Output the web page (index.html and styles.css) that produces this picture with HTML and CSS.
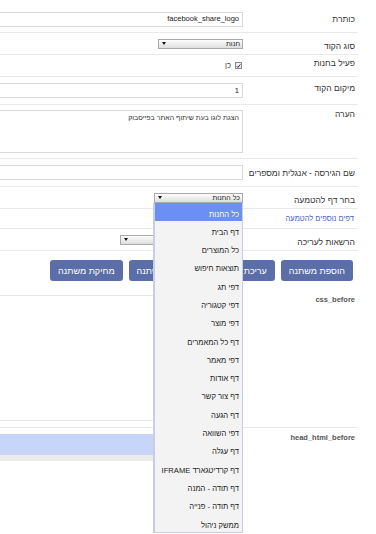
FILE: index.html
```html
<!DOCTYPE html>
<html lang="he" dir="rtl">
<head>
  <meta charset="UTF-8" />
  <meta name="viewport" content="width=device-width, initial-scale=1.0"/>
  <title>עריכת קוד</title>
  <link rel="stylesheet" href="styles.css">
</head>
<body>
  <div class="form">
    <div class="row row-title">
      <label class="lbl">כותרת</label>
      <div class="ctl"><input class="input" type="text" value="facebook_share_logo"></div>
    </div>

    <div class="row row-s">
      <label class="lbl low">סוג הקוד</label>
      <div class="ctl">
        <div class="select w-type"><span>חנות</span><span class="arrow"></span></div>
      </div>
    </div>

    <div class="row row-s">
      <label class="lbl high">פעיל בחנות</label>
      <div class="ctl">
        <span class="check"><svg viewBox="0 0 8 8" width="6" height="6"><path d="M1 4.2 L3.1 6.3 L7 1.4" fill="none" stroke="#222" stroke-width="1.5"/></svg></span>
        <span class="yes">כן</span>
      </div>
    </div>

    <div class="row row-i">
      <label class="lbl high">מיקום הקוד</label>
      <div class="ctl"><input class="input" type="text" value="1"></div>
    </div>

    <div class="row row-note">
      <label class="lbl">הערה</label>
      <div class="ctl"><textarea class="textarea">הצגת לוגו בעת שיתוף האתר בפייסבוק</textarea></div>
    </div>

    <div class="row row-i">
      <label class="lbl">שם הגירסה - אנגלית ומספרים</label>
      <div class="ctl"><input class="input" type="text" value=""></div>
    </div>

    <div class="row row-s">
      <label class="lbl low">בחר דף להטמעה</label>
      <div class="ctl">
        <div class="select w-page"><span>כל החנות</span><span class="arrow"></span></div>
      </div>
    </div>

    <div class="row row-link">
      <div class="lbl"><a href="#" class="more">דפים נוספים להטמעה</a></div>
    </div>

    <div class="row row-s">
      <label class="lbl low">הרשאות לעריכה</label>
      <div class="ctl">
        <div class="select w-perm"><span></span><span class="arrow"></span></div>
      </div>
    </div>

    <div class="actions">
      <button class="btn">הוספת משתנה</button>
      <button class="btn">עריכת משתנה</button>
      <button class="btn">שכפול משתנה</button>
      <button class="btn">מחיקת משתנה</button>
    </div>

    <div class="row row-code">
      <label class="lbl code-lbl">css_before</label>
      <div class="ctl"><div class="editor"></div></div>
    </div>

    <div class="row row-code2">
      <label class="lbl code-lbl">head_html_before</label>
      <div class="ctl">
        <div class="editor2">
          <div class="hl"></div>
          <div class="hscroll"></div>
        </div>
      </div>
    </div>
  </div>

  <ul class="dropdown">
    <li class="opt sel">כל החנות</li>
    <li class="opt">דף הבית</li>
    <li class="opt">כל המוצרים</li>
    <li class="opt">תוצאות חיפוש</li>
    <li class="opt">דפי תג</li>
    <li class="opt">דפי קטגוריה</li>
    <li class="opt">דפי מוצר</li>
    <li class="opt">דף כל המאמרים</li>
    <li class="opt">דפי מאמר</li>
    <li class="opt">דף אודות</li>
    <li class="opt">דף צור קשר</li>
    <li class="opt">דף הגעה</li>
    <li class="opt">דפי השוואה</li>
    <li class="opt">דף עגלה</li>
    <li class="opt">דף קרדיטגארד IFRAME</li>
    <li class="opt">דף תודה - המנה</li>
    <li class="opt">דף תודה - פנייה</li>
    <li class="opt">ממשק ניהול</li>
  </ul>
</body>
</html>
```

FILE: styles.css
```css
* {
  box-sizing: border-box;
}
html, body {
  margin: 0;
  overflow: hidden;
}
body {
  direction: rtl;
  width: 376px;
  height: 534px;
  position: relative;
  background-color: #fff;
  font-family: 'Liberation Sans', 'DejaVu Sans', sans-serif;
  color: #333;
}
.form {
  margin: 0 18px 0 -10px;
}
.row {
  display: flex;
  align-items: center;
  border-bottom: 1px solid #e9e9e9;
}
.row-title {
  height: 33px;
  padding-top: 6px;
}
.row-s {
  height: 22px;
}
.row-i {
  height: 28px;
}
.row-link {
  height: 20px;
}
.row-note {
  height: 54px;
  align-items: flex-start;
  padding-top: 5px;
}
.row-code {
  height: 133px;
  align-items: flex-start;
}
.row-code2 {
  height: 110px;
  align-items: flex-start;
  border-bottom: none;
}
.lbl {
  width: 115px;
  flex: none;
  padding-right: 3px;
  font-size: 8.5px;
  line-height: 10px;
  color: #333;
}
.lbl.low {
  padding-top: 5px;
}
.lbl.high {
  padding-bottom: 5px;
}
.row-note .lbl {
  margin-top: -1px;
}
.ctl {
  flex: 1;
  display: flex;
  align-items: center;
}
.input {
  width: 100%;
  height: 15px;
  border: 1px solid #d9d9d9;
  padding: 0 3px 1px;
  font-family: inherit;
  font-size: 7.5px;
  line-height: 11px;
  color: #222;
  outline: none;
}
.textarea {
  width: 100%;
  height: 43px;
  border: 1px solid #d9d9d9;
  padding: 2px 3px;
  font-family: inherit;
  font-size: 7px;
  line-height: 9px;
  color: #333;
  resize: none;
  outline: none;
}
.select {
  height: 10px;
  border: 1px solid #a9a9a9;
  background: linear-gradient(#fdfdfd, #dedede);
  display: flex;
  justify-content: space-between;
  align-items: center;
  padding: 0 2px 0 3px;
  font-size: 7px;
  line-height: 8px;
  color: #222;
}
.w-type {
  width: 85px;
}
.w-page {
  width: 89px;
}
.w-perm {
  width: 123px;
}
.arrow {
  width: 0;
  height: 0;
  border-left: 2.5px solid transparent;
  border-right: 2.5px solid transparent;
  border-top: 3px solid #111;
}
.check {
  width: 7px;
  height: 7px;
  margin-right: 1px;
  border: 1px solid #8a8a8a;
  background: #eee;
  display: flex;
  align-items: center;
  justify-content: center;
}
.yes {
  margin-right: 4px;
  font-size: 7.5px;
  color: #333;
}
.more {
  font-size: 7.5px;
  color: #4762b8;
  text-decoration: none;
  padding-right: 1px;
}
.actions {
  display: flex;
  gap: 6px;
  height: 44px;
  padding: 9px 5px 0;
}
.btn {
  height: 21px;
  padding: 0 8px;
  background-color: #5b6ea8;
  color: #fff;
  border: none;
  border-radius: 3px;
  font-family: inherit;
  font-size: 9px;
}
.code-lbl {
  font-weight: bold;
  font-size: 7.5px;
  color: #555;
}
.row-code2 .code-lbl {
  padding-top: 5px;
}
.editor {
  width: 100%;
  height: 126px;
  border-top: 1px solid #e6e6e6;
  border-bottom: 1px solid #e6e6e6;
}
.editor2 {
  width: 100%;
  margin-top: 6px;
}
.hl {
  height: 21px;
  background-color: #c7d6f8;
}
.hscroll {
  height: 6px;
  background-color: #ebebeb;
}
.dropdown {
  position: absolute;
  left: 153px;
  top: 203px;
  width: 90px;
  margin: 0;
  padding: 0;
  list-style: none;
  background-color: #f3f3f3;
  border-left: 2px solid #c8cce4;
  border-right: 1px solid #c8cce4;
  border-bottom: 1px solid #c8cce4;
}
.opt {
  height: 18.31px;
  padding: 2.5px 3px 0 0;
  font-size: 7.6px;
  line-height: 17px;
  color: #222;
  white-space: nowrap;
  overflow: hidden;
}
.opt.sel {
  background-color: #6b8ff3;
  color: #fff;
}
```
